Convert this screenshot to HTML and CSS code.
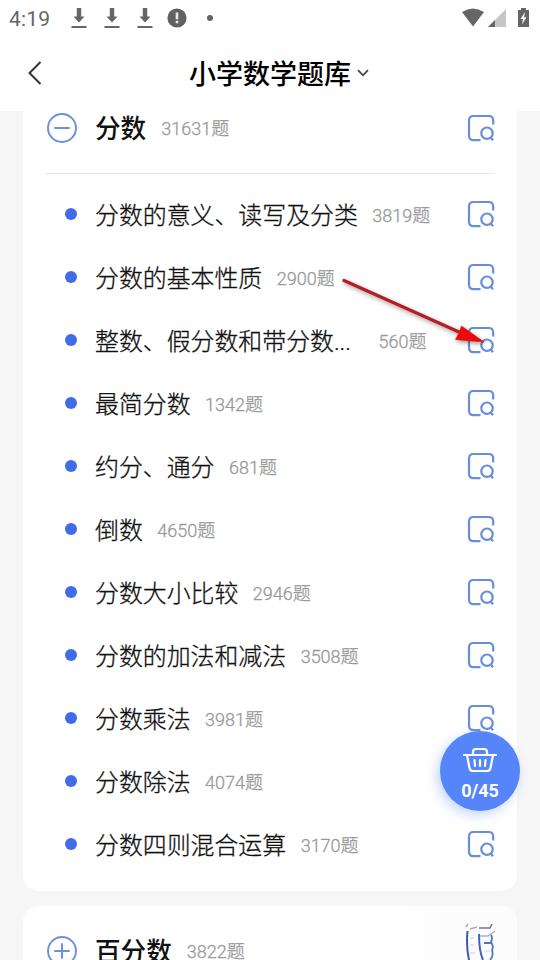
FILE: index.html
```
<!DOCTYPE html>
<html lang="zh-CN">
<head>
<meta charset="utf-8">
<title>小学数学题库</title>
<link rel="stylesheet" href="styles.css">
</head>
<body>
<svg width="0" height="0" class="defs">
  <symbol id="search" viewBox="0 0 28 28">
    <path d="M26.200 10.500V6.500Q26.200 2 21.700 2H6.500Q2 2 2 6.500V21.500Q2 26.200 6.500 26.200H13.500"/>
    <circle cx="20" cy="19.200" r="5.700"/>
    <path d="M24 23.700L26 26.200"/>
  </symbol>
  <symbol id="download" viewBox="0 0 16 22">
    <path d="M5.800 1h4.400v8.500h3.300L8 15.500 2.500 9.500h3.300zM.500 19h15v2H.500z"/>
  </symbol>
</svg>
<header class="top">
  <div class="status">
    <span class="time">4:19</span>
    <svg class="dl"><use href="#download"/></svg>
    <svg class="dl"><use href="#download"/></svg>
    <svg class="dl"><use href="#download"/></svg>
    <svg class="alert" viewBox="0 0 20 20"><circle cx="10" cy="10" r="9.600" fill="#626262"/><path d="M8.700 4.600h2.600v6.600H8.700zM8.700 12.800h2.600v2.400H8.700z" fill="#e8e8e8"/></svg>
    <i class="more"></i>
    <svg class="signals" viewBox="0 0 68 20">
      <path d="M0 4Q11-3 22 4L11 18.500z" fill="#666"/>
      <path d="M44 1V19H26z" fill="#c6c6c6"/><path d="M33 12V19H26z" fill="#666"/>
      <path d="M59 0h5v2h3v17H56V2h3z" fill="#666"/><path d="M63 4L58.500 11H61L60 16.500L64.500 9.300H62z" fill="#fff"/>
    </svg>
  </div>
  <div class="nav">
    <svg class="back" viewBox="0 0 14 24"><path d="M12.500 1L1.500 12L12.500 23"/></svg>
    <h1>小学数学题库</h1>
    <svg class="caret" viewBox="0 0 12 8"><path d="M1 1.200L6 6.300L11 1.200"/></svg>
  </div>
</header>
<main>
  <section class="card first">
    <div class="group">
      <svg class="toggle" viewBox="0 0 30 30"><circle cx="15" cy="15" r="14"/><path d="M8 15h14"/></svg>
      <h2>分数</h2><span class="count">31631题</span><svg class="find"><use href="#search"/></svg>
    </div>
    <ul>
      <li><b>分数的意义、读写及分类</b><span class="count">3819题</span><svg class="find"><use href="#search"/></svg></li>
      <li><b>分数的基本性质</b><span class="count">2900题</span><svg class="find"><use href="#search"/></svg></li>
      <li class="clipped"><b>整数、假分数和带分数...</b><span class="count">560题</span><svg class="find"><use href="#search"/></svg></li>
      <li><b>最简分数</b><span class="count">1342题</span><svg class="find"><use href="#search"/></svg></li>
      <li><b>约分、通分</b><span class="count">681题</span><svg class="find"><use href="#search"/></svg></li>
      <li><b>倒数</b><span class="count">4650题</span><svg class="find"><use href="#search"/></svg></li>
      <li><b>分数大小比较</b><span class="count">2946题</span><svg class="find"><use href="#search"/></svg></li>
      <li><b>分数的加法和减法</b><span class="count">3508题</span><svg class="find"><use href="#search"/></svg></li>
      <li><b>分数乘法</b><span class="count">3981题</span><svg class="find"><use href="#search"/></svg></li>
      <li><b>分数除法</b><span class="count">4074题</span><svg class="find"><use href="#search"/></svg></li>
      <li><b>分数四则混合运算</b><span class="count">3170题</span><svg class="find"><use href="#search"/></svg></li>
    </ul>
  </section>
  <section class="card second">
    <div class="group">
      <svg class="toggle" viewBox="0 0 30 30"><circle cx="15" cy="15" r="14"/><path d="M8 15h14M15 8v14"/></svg>
      <h2>百分数</h2><span class="count">3822题</span>
    </div>
  </section>
</main>
<svg class="stamp" viewBox="0 0 140 54">
  <defs><linearGradient id="fade"><stop offset="0" stop-color="#fafafa" stop-opacity="0"/><stop offset=".5" stop-color="#fcfcfc"/></linearGradient></defs>
  <path d="M0 0H106Q117 4 117 16V54H0z" fill="url(#fade)"/>
  <g fill="none">
    <path d="M67.500 25Q66 40 69 54" stroke="#4659a8" stroke-width="2"/>
    <path d="M66 21l2-3M70 23l7-2" stroke="#a6a9d2" stroke-width="1.500"/>
    <path d="M79 22H90L92 18" stroke="#77748e" stroke-width="1.600"/>
    <path d="M79 28Q79 45 83 54" stroke="#4266b6" stroke-width="2"/>
    <path d="M80 30H88L95 25" stroke="#a5b1dc" stroke-width="1.500"/>
    <path d="M91 29Q93 32 91 36Q94 41 92 44Q94 50 90 54M84 37H91" stroke="#5276c3" stroke-width="1.800"/>
    <path d="M70 32h4M70 39h4M70 47h5M84 45h6" stroke="#c5d0ec"/>
  </g>
</svg>
<svg class="arrow" viewBox="0 0 160 90">
  <path d="M14 11.500L129 63" stroke="#b81c20" stroke-width="3.200" stroke-linecap="round"/>
  <path d="M131.500 57L154 73L125.500 70.500L129 64z" fill="#ee0808" stroke="#d91010" stroke-width=".6"/>
</svg>
<div class="basket">
  <svg viewBox="0 0 34 26"><path d="M1 8H33M4 8L6.500 21Q7 24 10 24H24Q27 24 27.500 21L30 8M10 7V5Q10 2 13 2H21Q24 2 24 5V7M11.500 13L12 19M17 13V19M22.500 13L22 19"/></svg>
  <span>0/45</span>
</div>
</body>
</html>
```
FILE: styles.css
```
* { box-sizing: border-box; }
body {
  margin: 0;
  width: 540px;
  height: 960px;
  overflow: hidden;
  background: #f6f6f6;
  font-family: Roboto, "Noto Sans CJK SC", sans-serif;
  color: #111;
}
svg { display: block; flex: none; }
.defs { position: absolute; }
.top { height: 111px; background: #fff; }
.status {
  height: 36px;
  padding: 0 10px 0 9px;
  display: flex;
  align-items: center;
}
.time { width: 62px; font-size: 21px; color: #666; letter-spacing: .2px; padding-top: 2px; }
.dl { width: 16px; height: 22px; margin-right: 17px; fill: #666; }
.alert { width: 20px; height: 20px; margin-left: -3px; }
.more { width: 6px; height: 6px; margin-left: 20px; border-radius: 50%; background: #666; }
.signals { width: 68px; height: 20px; margin-left: auto; }
.nav { height: 74px; display: flex; align-items: center; padding-left: 28px; }
.back { width: 14px; height: 24px; fill: none; stroke: #333; stroke-width: 2; }
h1 { margin: 0 0 0 147px; padding-top: 3px; font-size: 27px; line-height: 40px; font-weight: 500; color: #000; }
.caret { width: 12px; height: 8px; margin-left: 6px; fill: none; stroke: #444; stroke-width: 1.8; }
main { padding: 0 23px; }
.card { background: #fff; border-radius: 16px; }
.first { height: 780px; border-radius: 0 0 16px 16px; }
.second { height: 100px; margin-top: 15px; padding-top: 10px; }
.group { margin: 0 23px; display: flex; align-items: center; }
.first .group { height: 63px; padding-bottom: 28px; border-bottom: 1px solid #e7e7e7; }
.first .group .find { margin-right: -1px; }
.second .group { height: 70px; }
.toggle { width: 30px; height: 30px; margin-left: 1px; fill: none; stroke: #6c93da; stroke-width: 2; stroke-linecap: round; }
h2 { margin: 0 15px 0 18px; padding-top: 2px; font-size: 25.6px; line-height: 34px; font-weight: 500; color: #111; }
.count { font-size: 18px; line-height: 24px; font-weight: 300; color: #999; -webkit-text-stroke: .3px #999; padding-top: 2px; }
.find { width: 28px; height: 28px; margin-left: auto; fill: none; stroke: #668edb; stroke-width: 2.2; stroke-linecap: butt; }
ul { list-style: none; margin: 0; padding: 8px 22px 0 42px; }
li { height: 63px; display: flex; align-items: center; }
li::before { content: ""; width: 12px; height: 12px; border-radius: 50%; background: #426be8; margin-right: 18px; }
li b { font-weight: 300; font-size: 23.9px; line-height: 34px; margin-right: 14.5px; padding-top: 4px; -webkit-text-stroke: .3px #111; }
li .count { padding-top: 4px; }
.clipped b { width: 269px; }
.stamp { position: absolute; left: 400px; top: 906px; width: 140px; height: 54px; }
.arrow { position: absolute; left: 330px; top: 269px; width: 160px; height: 90px; filter: drop-shadow(1px 2px 2px rgba(0, 0, 0, .4)); }
.basket {
  position: absolute;
  left: 440px;
  top: 731px;
  width: 80px;
  height: 80px;
  border-radius: 50%;
  background: #5685f9;
  box-shadow: -3px 4px 12px rgba(86, 133, 249, .35);
  display: flex;
  flex-direction: column;
  align-items: center;
  color: #fff;
  padding-top: 16px;
}
.basket svg { width: 34px; height: 26px; fill: none; stroke: #fff; stroke-width: 2.2; stroke-linecap: round; stroke-linejoin: round; }
.basket span { font-size: 18px; line-height: 22px; font-weight: 700; margin-top: 7px; }
```
